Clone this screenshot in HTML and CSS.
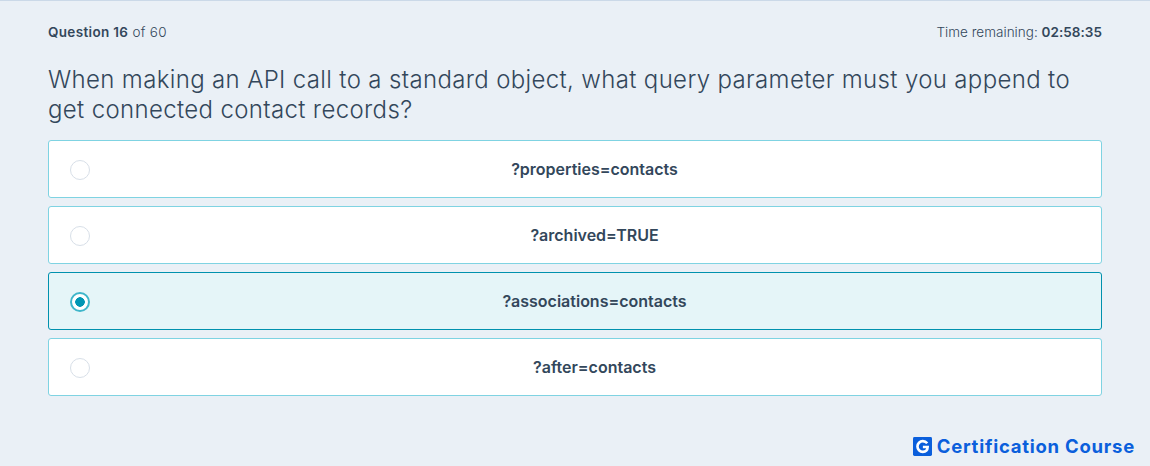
FILE: index.html
```html
<!DOCTYPE html>
<html lang="en">
<head>
<meta charset="utf-8">
<title>Question 16 of 60</title>
<link rel="stylesheet" href="styles.css">
</head>
<body>
<main class="quiz">
  <header class="status">
    <div class="progress"><strong>Question 16</strong> of 60</div>
    <div class="timer">Time remaining: <strong>02:58:35</strong></div>
  </header>
  <h1 class="question">When making an API call to a standard object, what query parameter must you append to get connected contact records?</h1>
  <div class="options">
    <div class="option"><span class="radio"></span><span class="label">?properties=contacts</span></div>
    <div class="option"><span class="radio"></span><span class="label">?archived=TRUE</span></div>
    <div class="option selected"><span class="radio"></span><span class="label">?associations=contacts</span></div>
    <div class="option"><span class="radio"></span><span class="label">?after=contacts</span></div>
  </div>
</main>
<footer class="brand">
  <svg class="logo" viewBox="0 0 20 20" aria-hidden="true">
    <rect width="20" height="20" rx="1.500" fill="#0b5fdc"/>
    <path d="M15 6.600A6 6 0 0 0 10.300 4.400a5.600 5.600 0 1 0 0 11.200c3.100 0 5-2 5.100-5.100H10.400" fill="none" stroke="#fff" stroke-width="2.800"/>
  </svg>
  <span>Certification Course</span>
</footer>
</body>
</html>
```
FILE: styles.css
```css
* { box-sizing: border-box; }
html, body { height: 100%; }
body {
  margin: 0;
  height: 466px;
  overflow: hidden;
  display: flex;
  flex-direction: column;
  background: #eaf0f6;
  border-top: 1px solid #cbd9e8;
  color: #33475b;
  font-family: "Inter", "Liberation Sans", sans-serif;
}
.quiz { padding: 21px 48px 0; }
.status {
  display: flex;
  justify-content: space-between;
  font-size: 13.500px;
  line-height: 20px;
  font-weight: 300;
}
.status strong { font-weight: 600; }
.progress { letter-spacing: 0.33px; }
.timer { letter-spacing: 0.03px; }
.question {
  margin: 23px 0 15px;
  font-size: 24px;
  line-height: 30px;
  font-weight: 300;
  letter-spacing: 0.35px;
}
.options { display: flex; flex-direction: column; gap: 8px; }
.option {
  display: flex;
  align-items: center;
  height: 58px;
  padding: 0 2px 0 21px;
  background: #fff;
  border: 1px solid #7fd3e2;
  border-radius: 3px;
}
.option.selected {
  background: #e5f5f8;
  border-color: #0091ae;
}
.radio {
  flex: none;
  width: 20px;
  height: 20px;
  margin-top: 2px;
  border: 1.500px solid #d8dfe8;
  border-radius: 50%;
  background: #fff;
}
.selected .radio {
  border: 2px solid #3fb6ca;
  background: radial-gradient(circle, #0096b4 0 4.500px, #fff 5px);
}
.label {
  flex: 1;
  text-align: center;
  font-size: 16px;
  font-weight: 600;
}
.brand {
  margin-top: auto;
  padding: 0 15px 10px 0;
  display: flex;
  justify-content: flex-end;
  align-items: center;
  gap: 5px;
  color: #0b5fdc;
  font-size: 18.500px;
  line-height: 20px;
  font-weight: 700;
  letter-spacing: 0.75px;
}
.logo { width: 19px; height: 19px; }
```
